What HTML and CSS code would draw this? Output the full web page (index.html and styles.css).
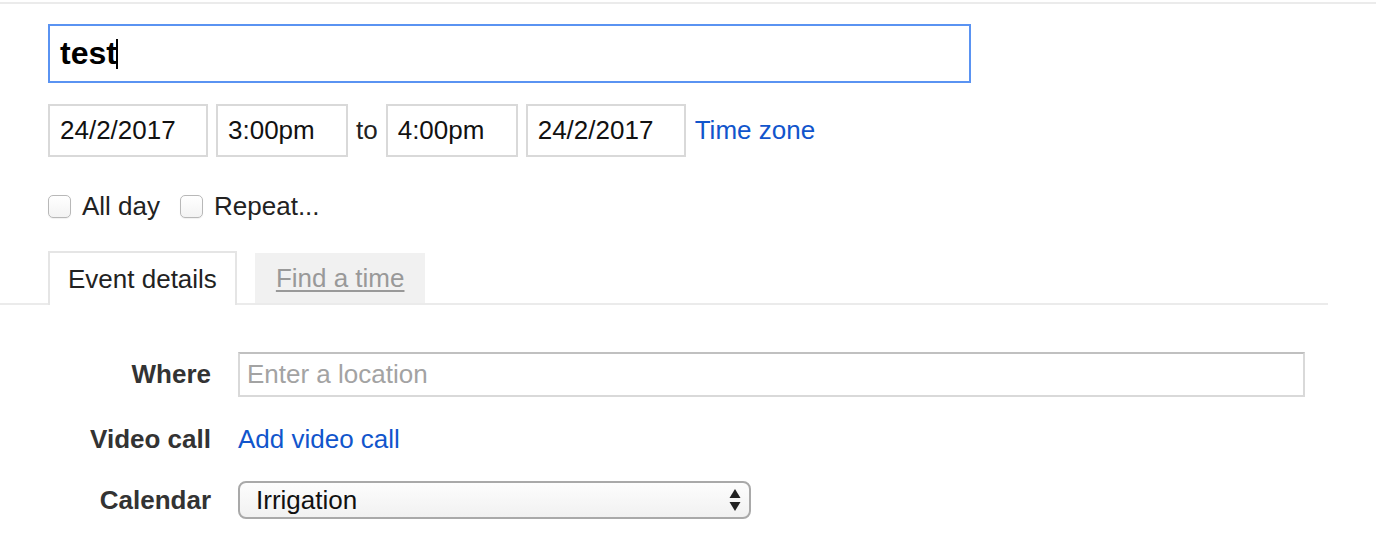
FILE: index.html
```html
<!DOCTYPE html>
<html>
<head>
<meta charset="utf-8">
<link rel="stylesheet" href="styles.css">
</head>
<body>
<div class="topline"></div>
<div class="page">
  <div class="title-field"><span class="title-text">test</span><span class="caret"></span></div>

  <div class="when-row">
    <div class="field date">24/2/2017</div>
    <div class="field time">3:00pm</div>
    <span class="to">to</span>
    <div class="field time">4:00pm</div>
    <div class="field date">24/2/2017</div>
    <a class="link tz" href="#">Time zone</a>
  </div>

  <div class="check-row">
    <label class="check"><span class="box"></span><span>All day</span></label>
    <label class="check"><span class="box"></span><span>Repeat...</span></label>
  </div>
</div>

<div class="tabs">
  <div class="tab active">Event details</div>
  <div class="tab inactive"><span class="tab-link">Find a time</span></div>
</div>

<div class="form">
  <div class="form-row row-where">
    <div class="label">Where</div>
    <div class="where-field">Enter a location</div>
  </div>
  <div class="form-row row-video">
    <div class="label">Video call</div>
    <a class="link" href="#">Add video call</a>
  </div>
  <div class="form-row row-cal">
    <div class="label">Calendar</div>
    <div class="select">
      <span>Irrigation</span>
      <svg class="arrows" width="12" height="24" viewBox="0 0 12 24"><path d="M6 1 L11.5 10 L0.5 10 Z" fill="#222"/><path d="M0.5 14 L11.5 14 L6 23 Z" fill="#222"/></svg>
    </div>
  </div>
</div>
</body>
</html>
```

FILE: styles.css
```css
html, body {
  margin: 0;
  padding: 0;
  background: #fff;
}
body {
  font-family: "Liberation Sans", Arial, Helvetica, sans-serif;
  font-size: 26px;
  color: #000;
}
.topline {
  height: 2px;
  margin-top: 2px;
  background: #ebebeb;
}
.page {
  padding-left: 48px;
}
.title-field {
  box-sizing: border-box;
  margin-top: 20px;
  width: 923px;
  height: 59px;
  border: 2px solid #5a93f2;
  padding: 0 10px;
  display: flex;
  align-items: center;
  font-size: 32px;
  font-weight: bold;
  color: #000;
}
.caret {
  display: inline-block;
  width: 2px;
  height: 30px;
  background: #000;
  margin-left: -1px;
}
.when-row {
  margin-top: 21px;
  display: flex;
  align-items: center;
  gap: 8px;
  height: 53px;
}
.field {
  box-sizing: border-box;
  height: 53px;
  border: 2px solid #d9d9d9;
  padding: 0 10px;
  display: flex;
  align-items: center;
  color: #111;
}
.field.date { width: 160px; }
.field.time { width: 132px; }
.to { color: #222; }
.tz { margin-left: 1px; }
.link {
  color: #1155cc;
  text-decoration: none;
}
.check-row {
  margin-top: 36px;
  display: flex;
  align-items: center;
  gap: 20px;
  height: 26px;
}
.check {
  display: flex;
  align-items: center;
  gap: 11px;
  color: #222;
}
.box {
  box-sizing: border-box;
  width: 23px;
  height: 23px;
  border: 1px solid #b8b8b8;
  border-radius: 5px;
  background: linear-gradient(#ffffff, #f3f3f3);
  box-shadow: 0 1px 1px rgba(0,0,0,0.06);
}
.tabs {
  margin-top: 31px;
  width: 1328px;
  box-sizing: border-box;
  padding-left: 48px;
  border-bottom: 2px solid #ebebeb;
  display: flex;
  align-items: flex-end;
  gap: 18px;
  height: 55px;
}
.tab {
  box-sizing: border-box;
  display: flex;
  align-items: center;
}
.tab.active {
  height: 54px;
  margin-bottom: -2px;
  border: 2px solid #e5e5e5;
  border-bottom: none;
  background: #fff;
  padding: 0 18px;
  color: #222;
}
.tab.inactive {
  height: 50px;
  background: #f1f1f1;
  padding: 0 21px;
}
.tab-link {
  color: #999;
  text-decoration: underline;
  text-underline-offset: 3px;
}
.form {
  margin-top: 47px;
  display: flex;
  flex-direction: column;
  gap: 27px;
}
.form-row {
  display: grid;
  grid-template-columns: 211px auto;
  column-gap: 27px;
  align-items: center;
}
.label {
  text-align: right;
  font-weight: bold;
  color: #333;
}
.row-video {
  height: 30px;
}
.where-field {
  box-sizing: border-box;
  width: 1067px;
  height: 45px;
  border: 2px solid #d9d9d9;
  border-top-color: #c0c0c0;
  padding: 0 7px;
  display: flex;
  align-items: center;
  color: #a3a3a3;
}
.select {
  box-sizing: border-box;
  width: 513px;
  height: 38px;
  border: 2px solid #a9a9a9;
  border-radius: 8px;
  background: linear-gradient(#fdfdfd, #f1f1f1);
  padding: 0 8px 0 16px;
  display: flex;
  align-items: center;
  justify-content: space-between;
  color: #111;
}
```
